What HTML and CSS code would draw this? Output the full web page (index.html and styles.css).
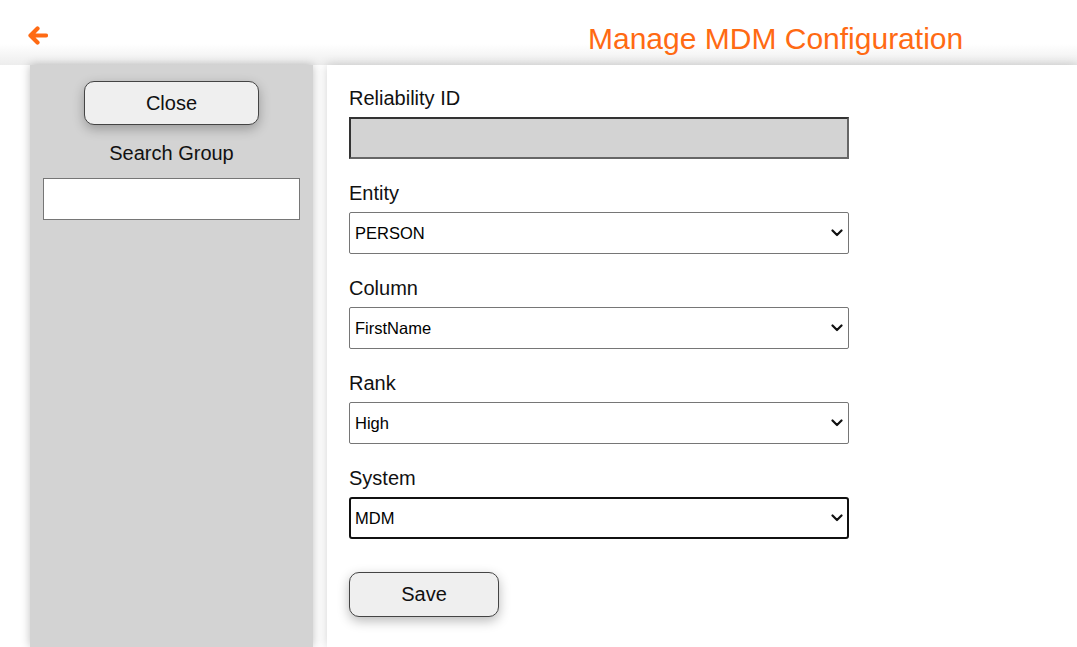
FILE: index.html
```html
<!DOCTYPE html>
<html>
<head>
<meta charset="utf-8">
<title>Manage MDM Configuration</title>
<link rel="stylesheet" href="styles.css">
</head>
<body>
<header class="topbar">
  <a class="back" href="#" aria-label="Back">
    <svg width="21" height="19" viewBox="0 0 21 19"><path d="M19 9.5H3.5M10.5 2.5L3.5 9.5L10.5 16.5" fill="none" stroke="#ff6a13" stroke-width="4.2" stroke-linecap="round" stroke-linejoin="round"/></svg>
  </a>
  <h1 class="title">Manage MDM Configuration</h1>
</header>
<div class="layout">
  <aside class="sidebar">
    <button class="btn btn-close">Close</button>
    <label class="side-label" for="search">Search Group</label>
    <input class="search" id="search" type="text">
  </aside>
  <main class="panel">
    <div class="field">
      <label class="label">Reliability ID</label>
      <input class="ctl ctl-disabled" type="text" disabled>
    </div>
    <div class="field">
      <label class="label">Entity</label>
      <div class="select-wrap">
        <select class="ctl"><option>PERSON</option></select>
        <svg class="chev" width="12" height="8" viewBox="0 0 12 8"><path d="M1.5 1.5L6 6L10.5 1.5" fill="none" stroke="#111" stroke-width="2.2" stroke-linecap="round" stroke-linejoin="round"/></svg>
      </div>
    </div>
    <div class="field">
      <label class="label">Column</label>
      <div class="select-wrap">
        <select class="ctl"><option>FirstName</option></select>
        <svg class="chev" width="12" height="8" viewBox="0 0 12 8"><path d="M1.5 1.5L6 6L10.5 1.5" fill="none" stroke="#111" stroke-width="2.2" stroke-linecap="round" stroke-linejoin="round"/></svg>
      </div>
    </div>
    <div class="field">
      <label class="label">Rank</label>
      <div class="select-wrap">
        <select class="ctl"><option>High</option></select>
        <svg class="chev" width="12" height="8" viewBox="0 0 12 8"><path d="M1.5 1.5L6 6L10.5 1.5" fill="none" stroke="#111" stroke-width="2.2" stroke-linecap="round" stroke-linejoin="round"/></svg>
      </div>
    </div>
    <div class="field">
      <label class="label">System</label>
      <div class="select-wrap">
        <select class="ctl ctl-focus"><option>MDM</option></select>
        <svg class="chev" width="12" height="8" viewBox="0 0 12 8"><path d="M1.5 1.5L6 6L10.5 1.5" fill="none" stroke="#111" stroke-width="2.2" stroke-linecap="round" stroke-linejoin="round"/></svg>
      </div>
    </div>
    <button class="btn btn-save">Save</button>
  </main>
</div>
</body>
</html>
```
FILE: styles.css
```css
html, body {
  margin: 0;
  padding: 0;
  height: 100%;
  overflow: hidden;
}
body {
  background: #fff;
  font-family: "Liberation Sans", Arial, sans-serif;
  color: #111;
}
.topbar {
  height: 65px;
  display: flex;
  align-items: flex-start;
  background: linear-gradient(to bottom, #fff 0px, #fff 44px, #ededed 65px);
}
.back {
  display: block;
  margin: 26px 0 0 27px;
  line-height: 0;
}
.title {
  margin: 22px 0 0 540px;
  font-size: 30px;
  font-weight: normal;
  color: #ff6a13;
  line-height: 34px;
}
.layout {
  display: flex;
  height: calc(100% - 65px);
}
.sidebar {
  margin-left: 30px;
  width: 283px;
  background: #d3d3d3;
  box-shadow: 0 0 9px rgba(0, 0, 0, 0.25);
  display: flex;
  flex-direction: column;
  align-items: center;
  padding-top: 16px;
  box-sizing: border-box;
}
.btn {
  font-family: "Liberation Sans", Arial, sans-serif;
  font-size: 20px;
  color: #111;
  background: #efefef;
  border: 1px solid #444;
  border-radius: 10px;
  box-shadow: 0 4px 12px rgba(0, 0, 0, 0.28);
  cursor: pointer;
}
.btn-close {
  width: 175px;
  height: 44px;
}
.side-label {
  margin-top: 17px;
  font-size: 20px;
  line-height: 23px;
}
.search {
  margin-top: 13px;
  width: 257px;
  height: 42px;
  box-sizing: border-box;
  border: 1px solid #767676;
  background: #fff;
  font-size: 16px;
}
.panel {
  margin-left: 14px;
  flex: 1;
  background: #fff;
  box-shadow: 0 0 10px rgba(0, 0, 0, 0.18);
  padding: 22px 0 0 22px;
  display: flex;
  flex-direction: column;
  align-items: flex-start;
}
.field {
  display: flex;
  flex-direction: column;
  margin-bottom: 23px;
}
.label {
  font-size: 20px;
  line-height: 23px;
  margin-bottom: 7px;
}
.select-wrap {
  position: relative;
  width: 500px;
  height: 42px;
}
.chev {
  position: absolute;
  right: 6px;
  top: 17px;
  pointer-events: none;
}
.ctl {
  display: block;
  width: 500px;
  height: 42px;
  box-sizing: border-box;
  border: 1px solid #767676;
  border-radius: 2px;
  background: #fff;
  font-family: "Liberation Sans", Arial, sans-serif;
  font-size: 16.5px;
  color: #000;
  padding: 0 5px;
  margin: 0;
  -webkit-appearance: none;
  appearance: none;
}
.ctl-disabled {
  background: #d3d3d3;
  border: 2px solid #333;
  border-right-color: #666;
  border-bottom-color: #666;
  border-radius: 0;
}
.ctl-focus {
  border: 2px solid #111;
  border-radius: 3px;
  padding-left: 4px;
}
.btn-save {
  margin-top: 10px;
  width: 150px;
  height: 45px;
}
```
